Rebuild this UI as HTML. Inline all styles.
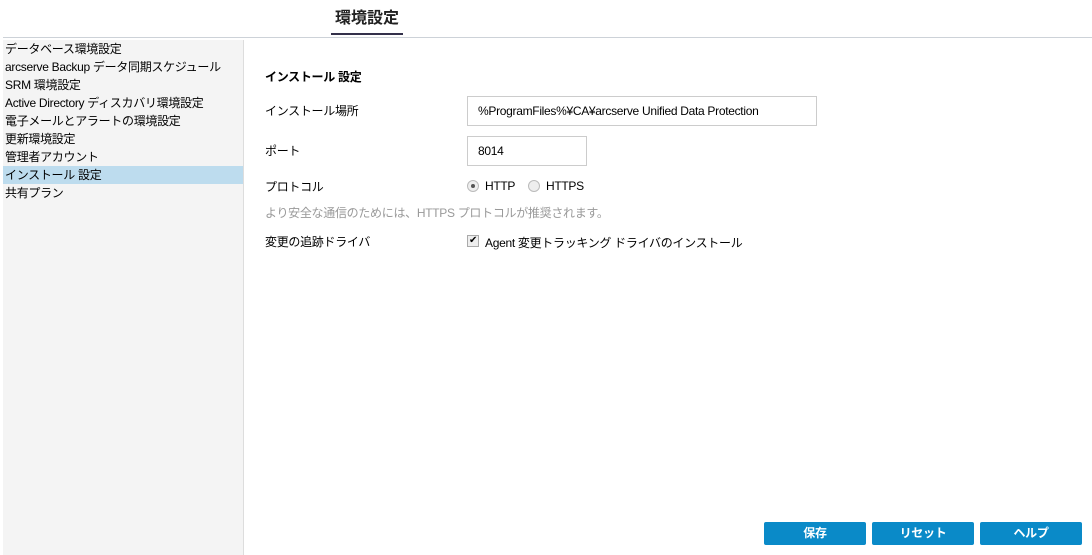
<!DOCTYPE html>
<html><head><meta charset="utf-8"><style>
*{margin:0;padding:0;box-sizing:border-box}
body{width:1092px;height:555px;background:#fff;font-family:"Liberation Sans","Noto Sans CJK JP",sans-serif;font-size:12px;color:#000;position:relative;overflow:hidden;letter-spacing:-0.3px}
.a{position:absolute;white-space:nowrap}
.title{left:331px;top:4px;width:72px;text-align:center;font-size:16px;color:#222;font-weight:bold;letter-spacing:0}
.ul{left:331px;top:33px;width:72px;height:2px;background:#33304a}
.gl{left:3px;top:37px;width:1089px;height:1px;background:#cdd2d8}
.left{left:3px;top:40px;width:241px;height:515px;background:#f4f4f4;border-right:1px solid #ddd}
.item{position:absolute;left:0;width:240px;height:18px;line-height:18px;padding-left:2px;font-size:12px}
.sel{background:#bddcee}
.inp{border:1px solid #ccc;background:#fff;padding-left:10px;font-size:12px;line-height:28px}
.btn{top:522px;width:102px;height:23px;background:#0a8ac8;color:#fff;font-weight:bold;text-align:center;line-height:23px;border-radius:2px;font-size:12px}
.rad{width:12px;height:12px;border-radius:50%;border:1px solid #bbb;background:#eee}
</style></head><body>
<div class="a title">環境設定</div>
<div class="a ul"></div>
<div class="a gl"></div>
<div class="a left">
<div class="item" style="top:0">データベース環境設定</div>
<div class="item" style="top:18px">arcserve Backup データ同期スケジュール</div>
<div class="item" style="top:36px">SRM 環境設定</div>
<div class="item" style="top:54px">Active Directory ディスカバリ環境設定</div>
<div class="item" style="top:72px">電子メールとアラートの環境設定</div>
<div class="item" style="top:90px">更新環境設定</div>
<div class="item" style="top:108px">管理者アカウント</div>
<div class="item sel" style="top:126px">インストール 設定</div>
<div class="item" style="top:144px">共有プラン</div>
</div>
<div class="a" style="left:265px;top:68px;font-weight:bold">インストール 設定</div>
<div class="a" style="left:265px;top:102px">インストール場所</div>
<div class="a inp" style="left:467px;top:96px;width:350px;height:30px">%ProgramFiles%¥CA¥arcserve Unified Data Protection</div>
<div class="a" style="left:265px;top:142px">ポート</div>
<div class="a inp" style="left:467px;top:136px;width:120px;height:30px">8014</div>
<div class="a" style="left:265px;top:178px">プロトコル</div>
<div class="a rad" style="left:467px;top:180px"><div style="width:4px;height:4px;border-radius:50%;background:#555;margin:3px"></div></div>
<div class="a" style="left:485px;top:179px">HTTP</div>
<div class="a rad" style="left:528px;top:180px"></div>
<div class="a" style="left:546px;top:179px">HTTPS</div>
<div class="a" style="left:265px;top:204px;color:#999">より安全な通信のためには、HTTPS プロトコルが推奨されます。</div>
<div class="a" style="left:265px;top:233px">変更の追跡ドライバ</div>
<div class="a" style="left:467px;top:235px;width:12px;height:12px;border:1px solid #aaa;background:#eee;font-size:10px;line-height:10px;text-align:center">✔</div>
<div class="a" style="left:485px;top:234px">Agent 変更トラッキング ドライバのインストール</div>
<div class="a btn" style="left:764px">保存</div>
<div class="a btn" style="left:872px">リセット</div>
<div class="a btn" style="left:980px">ヘルプ</div>
</body></html>
